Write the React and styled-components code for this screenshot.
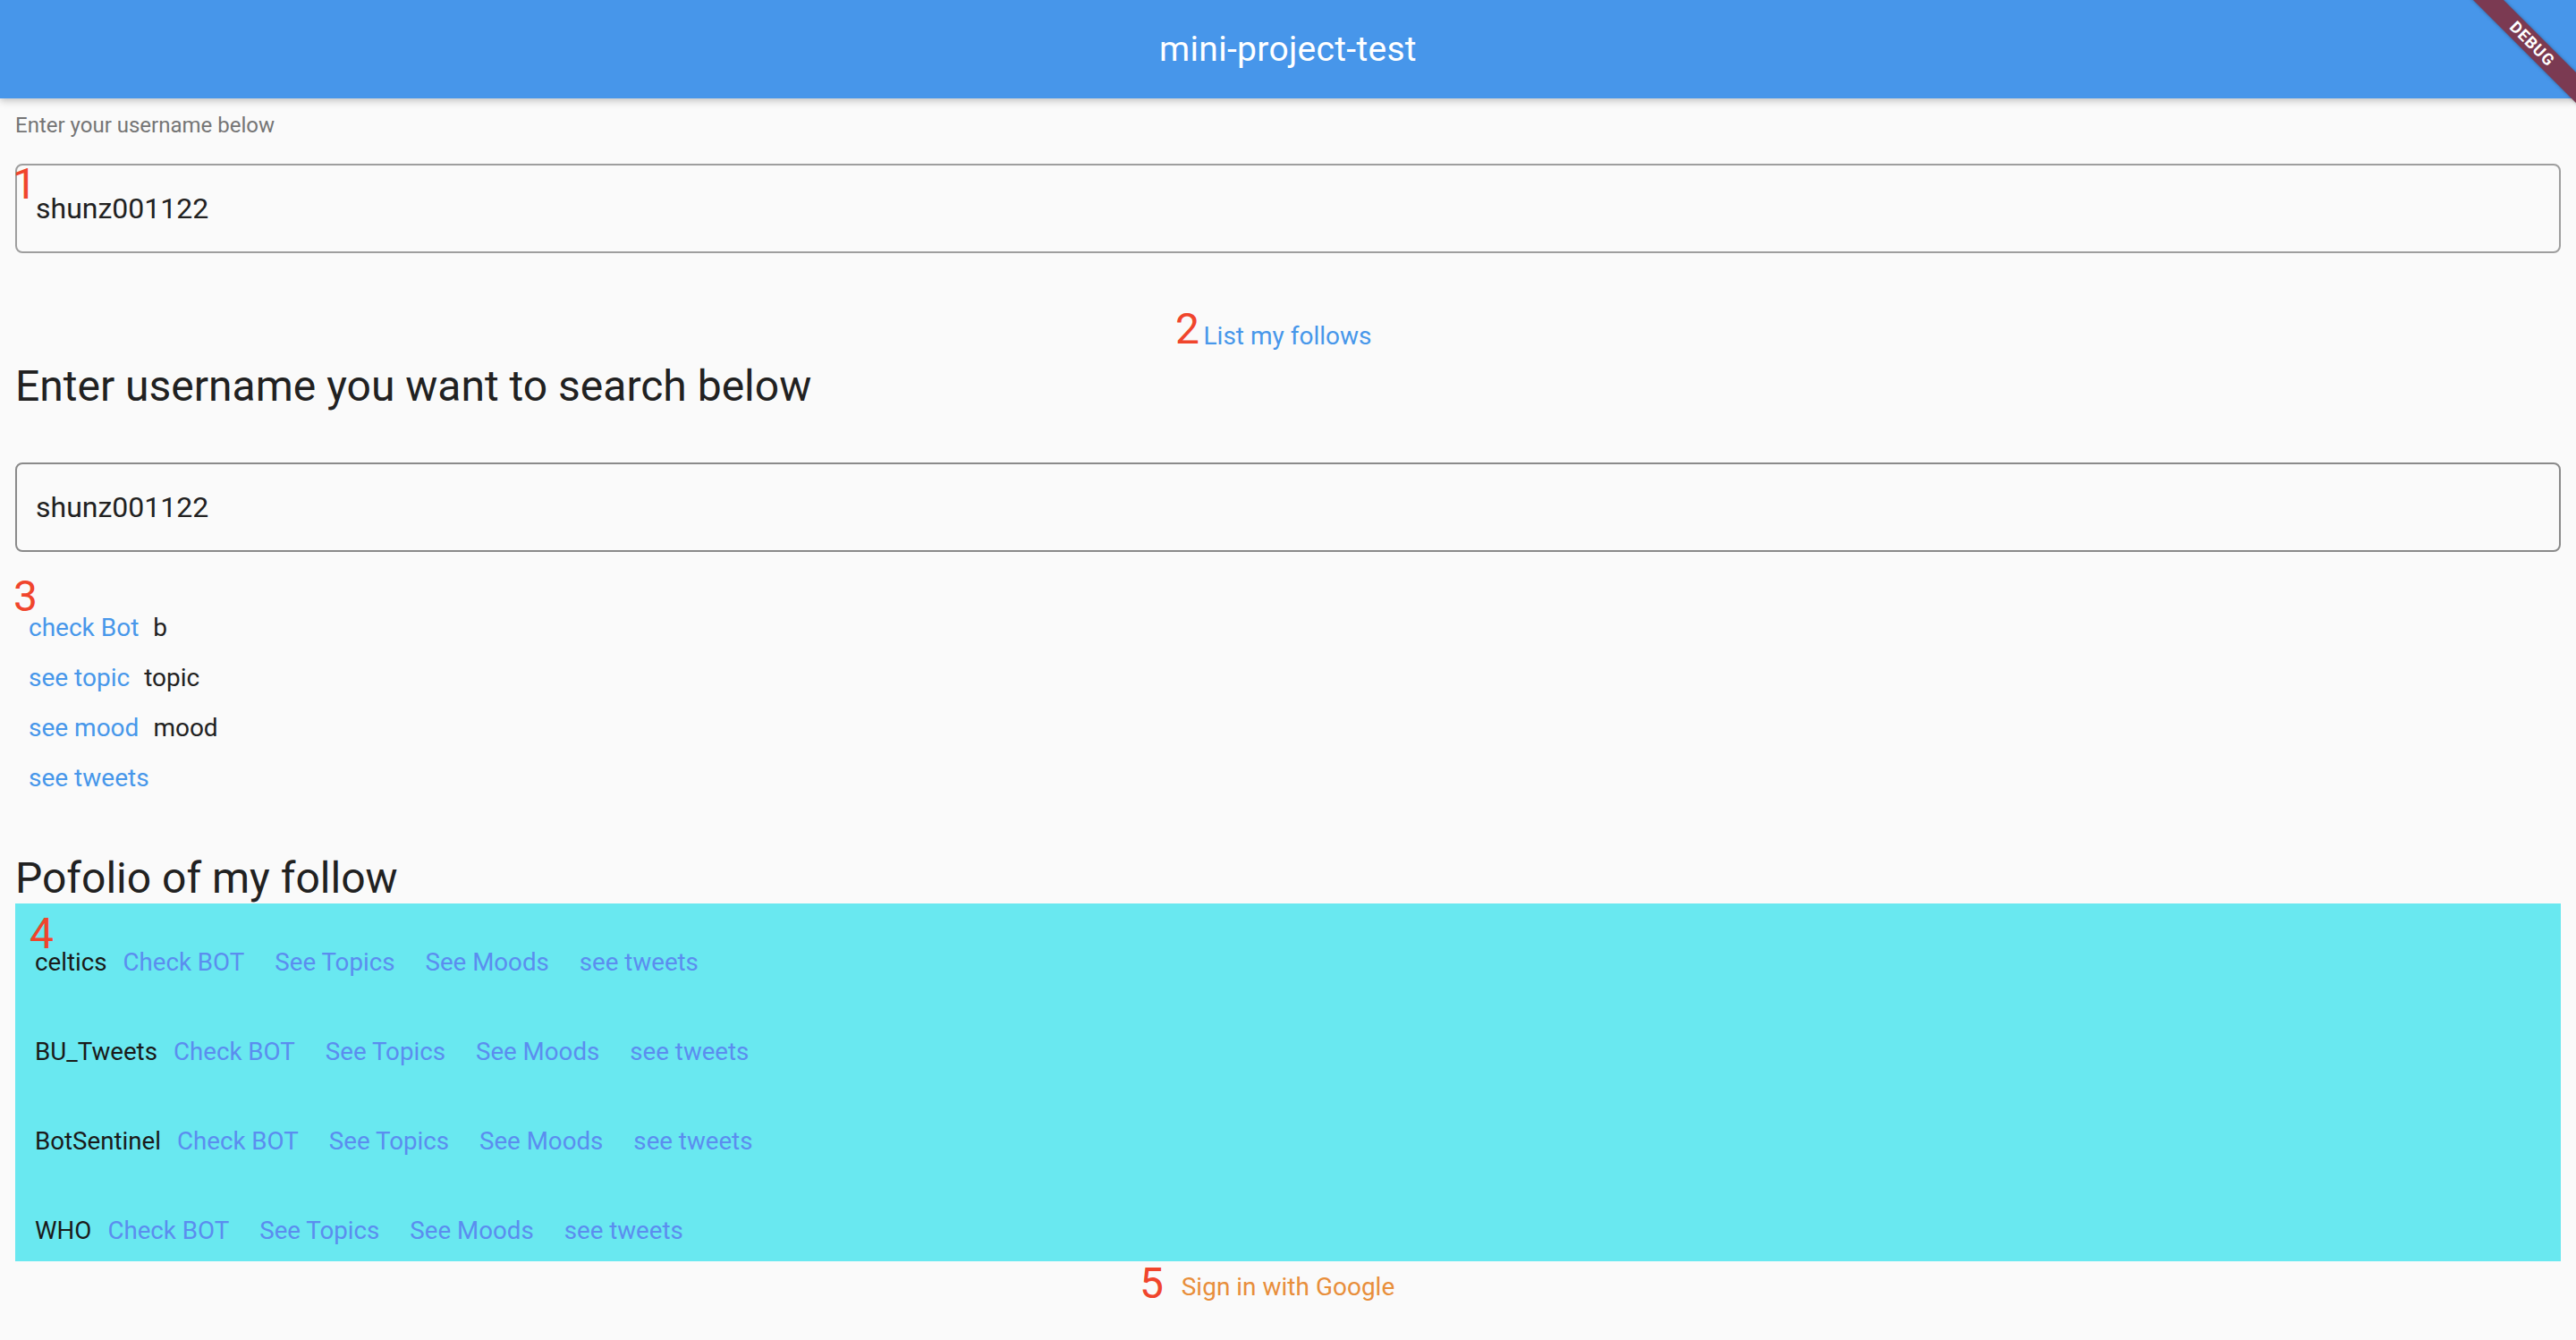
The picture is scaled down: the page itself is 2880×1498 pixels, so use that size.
import React from 'react';
import styled, { createGlobalStyle } from 'styled-components';

const GlobalStyle = createGlobalStyle`
    html, body {
        margin: 0;
        padding: 0;
        background: #fafafa;
    }
    body {
        font-family: 'Roboto', 'Liberation Sans', sans-serif;
        color: #212121;
    }
`;

const follows = ['celtics', 'BU_Tweets', 'BotSentinel', 'WHO'];

const checks = [
    { label: 'check Bot', value: 'b' },
    { label: 'see topic', value: 'topic' },
    { label: 'see mood', value: 'mood' },
    { label: 'see tweets', value: '' },
];

function App(){
    return(
        <Page>
            <GlobalStyle />
            <AppBar>
                <Title>mini-project-test</Title>
                <BannerClip>
                    <Ribbon>DEBUG</Ribbon>
                </BannerClip>
            </AppBar>

            <Body>
                <Label>Enter your username below</Label>
                <Field $top={29} $border="#9e9e9e">shunz001122</Field>

                <Center $top={68.6}>
                    <Link $short>List my follows</Link>
                </Center>

                <Heading $top={4}>Enter username you want to search below</Heading>
                <Field $top={57} $border="#8a8a8a">shunz001122</Field>

                <CheckList>
                    {checks.map(c => (
                        <CheckRow key={c.label}>
                            <Link>{c.label}</Link>
                            {c.value && <Value>{c.value}</Value>}
                        </CheckRow>
                    ))}
                </CheckList>

                <Heading $top={56}>Pofolio of my follow</Heading>
                <FollowBox>
                    {follows.map(name => (
                        <FollowRow key={name}>
                            <Name>{name}</Name>
                            <RowLink>Check BOT</RowLink>
                            <RowLink>See Topics</RowLink>
                            <RowLink>See Moods</RowLink>
                            <RowLink>see tweets</RowLink>
                        </FollowRow>
                    ))}
                </FollowBox>

                <Center $top={4.6}>
                    <GoogleButton>Sign in with Google</GoogleButton>
                </Center>
            </Body>

            <Mark $x={14} $y={182}>1</Mark>
            <Mark $x={1314} $y={344}>2</Mark>
            <Mark $x={15} $y={643}>3</Mark>
            <Mark $x={33} $y={1020}>4</Mark>
            <Mark $x={1274} $y={1411}>5</Mark>
        </Page>
    )
}

const Page = styled.div`
    position: relative;
    min-height: 1498px;
    background: #fafafa;
`;

const AppBar = styled.header`
    position: relative;
    height: 110px;
    background: #4796ea;
    display: flex;
    justify-content: center;
    align-items: center;
    box-shadow: 0 3px 8px rgba(0,0,0,.22);
    z-index: 2;
`;

const Title = styled.h1`
    margin: 0;
    color: white;
    font-size: 39px;
    font-weight: 400;
    letter-spacing: .3px;
`;

const BannerClip = styled.div`
    position: absolute;
    top: 0;
    right: 0;
    width: 160px;
    height: 160px;
    overflow: hidden;
    pointer-events: none;
`;

const Ribbon = styled.div`
    position: absolute;
    left: -39px;
    top: 37px;
    width: 300px;
    height: 24px;
    transform: rotate(45deg);
    background: #7b3a52;
    box-shadow: 0 0 4px rgba(0,0,0,.35);
    color: white;
    font-family: 'Roboto', sans-serif;
    font-weight: 700;
    font-size: 18px;
    letter-spacing: 1px;
    line-height: 24px;
    text-align: center;
`;

const Body = styled.main`
    padding: 0 17px;
    display: flex;
    flex-direction: column;
`;

const Label = styled.div`
    margin-top: 16px;
    font-size: 24px;
    line-height: 28px;
    color: #757575;
`;

const Field = styled.div`
    margin-top: ${p => p.$top}px;
    height: 100px;
    box-sizing: border-box;
    border: 2px solid ${p => p.$border};
    border-radius: 8px;
    padding-left: 21px;
    display: flex;
    align-items: center;
    font-size: 32px;
    color: #212121;
`;

const Center = styled.div`
    display: flex;
    justify-content: center;
    margin-top: ${p => p.$top}px;
`;

const Link = styled.span`
    padding: 0 16px 0 15px;
    height: ${p => p.$short ? 48 : 56}px;
    display: inline-flex;
    align-items: center;
    font-size: 28px;
    color: #4797ea;
`;

const Heading = styled.h2`
    margin: ${p => p.$top}px 0 0;
    font-size: 48px;
    font-weight: 400;
    line-height: 56px;
    color: #212121;
`;

const CheckList = styled.div`
    margin-top: 57px;
    display: flex;
    flex-direction: column;
`;

const CheckRow = styled.div`
    display: flex;
    align-items: center;
    height: 56px;
`;

const Value = styled.span`
    font-size: 28px;
    color: #212121;
`;

const FollowBox = styled.section`
    background: #69e8f0;
    padding: 33px 0 1px 22px;
    display: flex;
    flex-direction: column;
    gap: 34px;
`;

const FollowRow = styled.div`
    display: flex;
    align-items: center;
    height: 66px;
`;

const Name = styled.span`
    font-size: 27.7px;
    color: #1a1a1a;
    margin-right: 1px;
`;

const RowLink = styled.span`
    padding: 0 17px;
    font-size: 27.7px;
    color: #5b8def;
`;

const GoogleButton = styled.span`
    height: 48px;
    display: inline-flex;
    align-items: center;
    font-size: 28px;
    color: #e88e3a;
`;

const Mark = styled.span`
    position: absolute;
    left: ${p => p.$x}px;
    top: ${p => p.$y}px;
    font-size: 48px;
    line-height: 48px;
    color: #f0452c;
    z-index: 3;
`;

export default App;
